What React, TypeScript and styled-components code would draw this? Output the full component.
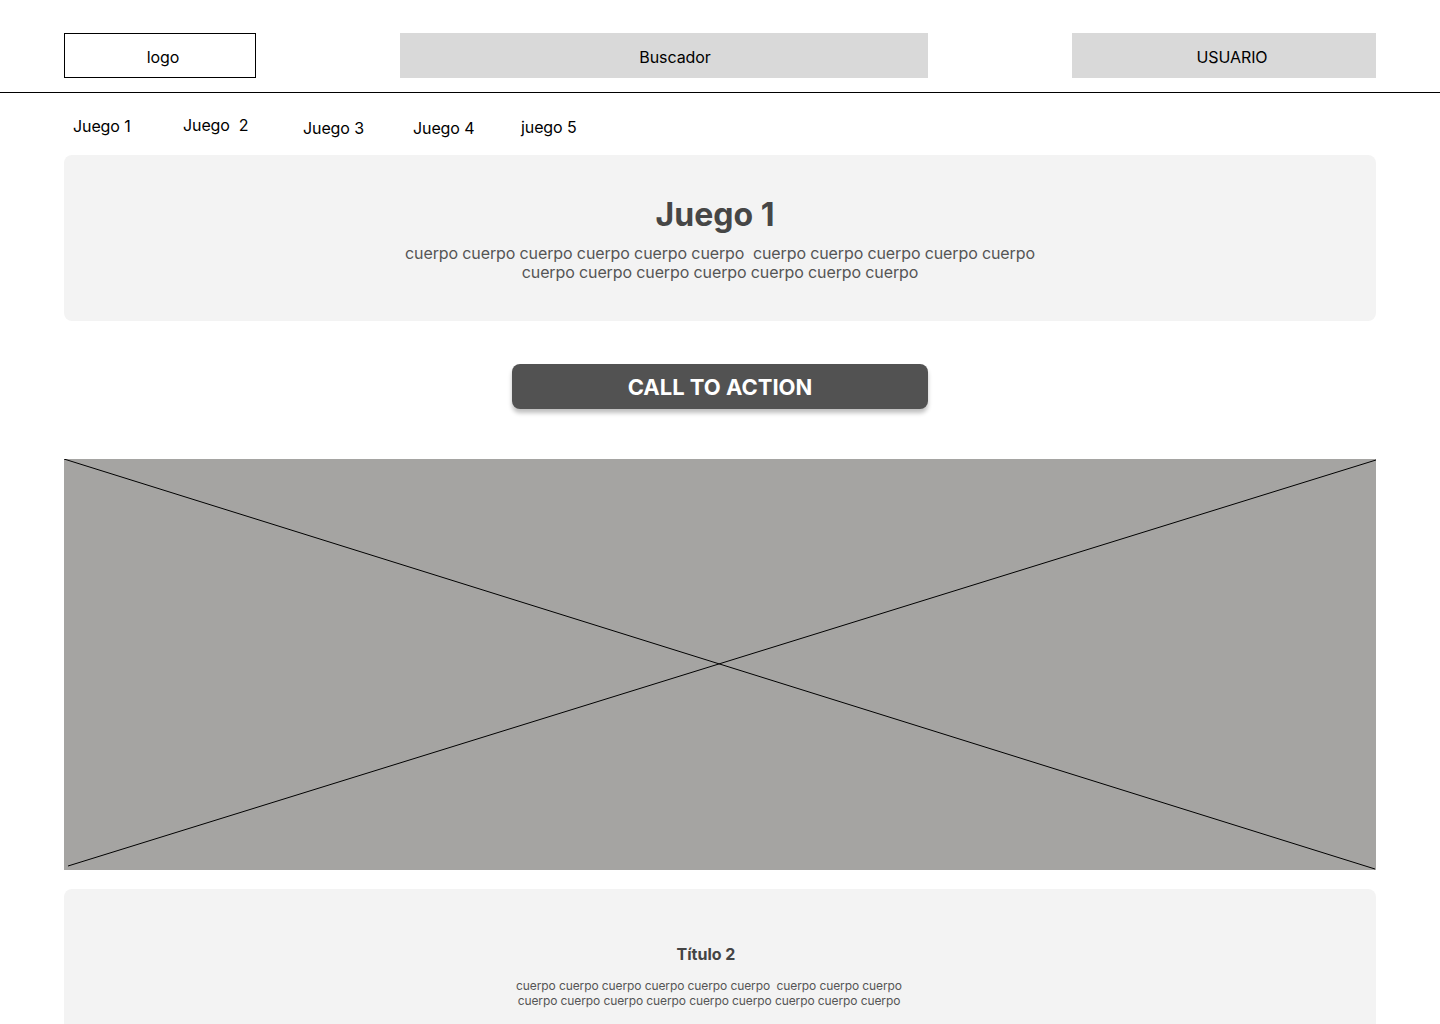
import styled, { createGlobalStyle } from 'styled-components'

const GlobalStyle = createGlobalStyle`
    body {
        margin: 0;
        background: #ffffff;
        font-family: Inter, "Noto Sans", Arial, sans-serif;
        color: #000;
    }
`

const Page = styled.div`
    width: 1440px;
    min-height: 1024px;
    overflow: hidden;
`

const Header = styled.header`
    display: flex;
    gap: 144px;
    padding: 33px 64px 14px;
    border-bottom: 1px solid #000;
`

const HeaderBox = styled.div<{ $w: number; $shift: number; $outlined?: boolean }>`
    width: ${p => p.$w}px;
    height: 45px;
    box-sizing: border-box;
    display: flex;
    align-items: center;
    justify-content: center;
    padding: 2px 0 0 ${p => p.$shift}px;
    font-size: 16px;
    letter-spacing: -0.1px;
    background: ${p => (p.$outlined ? '#fff' : '#d9d9d9')};
    border: ${p => (p.$outlined ? '1px solid #000' : 'none')};
`

const Nav = styled.nav`
    display: flex;
    padding: 24px 0 18px 73px;
`

const Tab = styled.a<{ $w: number; $dy?: number }>`
    width: ${p => p.$w}px;
    font-size: 16px;
    line-height: 20px;
    letter-spacing: -0.1px;
    color: #000;
    text-decoration: none;
    white-space: pre;
    transform: translateY(${p => p.$dy || 0}px);
`

const Main = styled.main`
    display: flex;
    flex-direction: column;
    align-items: center;
    padding: 0 64px;
`

const Card = styled.section<{ $pt: number; $pb: number; $shift?: number }>`
    width: 100%;
    box-sizing: border-box;
    background: #f3f3f3;
    border-radius: 8px;
    padding: ${p => p.$pt}px ${p => p.$shift || 0}px ${p => p.$pb}px 0;
    text-align: center;
    color: #4a4a4a;
`

const HeroTitle = styled.h1`
    margin: 0 10px 0 0;
    font-size: 32px;
    line-height: 39px;
    font-weight: 700;
    color: #464646;
`

const HeroText = styled.p`
    margin: 10px 0 0;
    font-size: 16px;
    line-height: 19px;
    letter-spacing: -0.12px;
    color: #555;
`

const CTA = styled.button`
    margin-top: 43px;
    width: 416px;
    height: 45px;
    border: none;
    border-radius: 8px;
    background: #525252;
    color: #fff;
    font-family: Inter, "Noto Sans", Arial, sans-serif;
    font-size: 22px;
    font-weight: 700;
    box-shadow: 0 4px 4px rgba(0, 0, 0, 0.25);
    cursor: pointer;
`

const Placeholder = styled.div`
    margin-top: 50px;
    width: 100%;
    height: 411px;
    background: #a5a4a2;
`

const Cross = styled.svg`
    display: block;
    width: 100%;
    height: 100%;
`

const SecondCard = styled(Card)`
    margin-top: 19px;
`

const SectionTitle = styled.h2`
    margin: 0 6px 0 0;
    font-size: 16px;
    line-height: 20px;
    font-weight: 700;
    color: #444;
`

const SectionText = styled.p`
    margin: 14px 0 0;
    font-size: 12px;
    line-height: 15px;
    letter-spacing: -0.1px;
    color: #555;
`

const tabs = [
    { label: 'Juego 1', w: 110, dy: -1 },
    { label: 'Juego  2', w: 120, dy: -2 },
    { label: 'Juego 3', w: 110, dy: 1 },
    { label: 'Juego 4', w: 108, dy: 1 },
    { label: 'juego 5', w: 100, dy: 0 },
]

const App = () => {
    return (
        <Page>
            <GlobalStyle />
            <Header>
                <HeaderBox $w={192} $shift={6} $outlined>logo</HeaderBox>
                <HeaderBox $w={528} $shift={22}>Buscador</HeaderBox>
                <HeaderBox $w={304} $shift={16}>USUARIO</HeaderBox>
            </Header>
            <Nav>
                {tabs.map(t => (
                    <Tab key={t.label} $w={t.w} $dy={t.dy} href="#">
                        {t.label}
                    </Tab>
                ))}
            </Nav>
            <Main>
                <Card $pt={40} $pb={39}>
                    <HeroTitle>Juego 1</HeroTitle>
                    <HeroText>
                        cuerpo cuerpo cuerpo cuerpo cuerpo cuerpo&nbsp; cuerpo cuerpo cuerpo cuerpo cuerpo
                        <br />
                        cuerpo cuerpo cuerpo cuerpo cuerpo cuerpo cuerpo
                    </HeroText>
                </Card>
                <CTA>CALL TO ACTION</CTA>
                <Placeholder>
                    <Cross viewBox="0 0 1312 411" preserveAspectRatio="none">
                        <line x1="0" y1="0" x2="1311" y2="410" stroke="#000" strokeWidth="1" />
                        <line x1="4" y1="407" x2="1312" y2="1" stroke="#000" strokeWidth="1" />
                    </Cross>
                </Placeholder>
                <SecondCard $pt={55} $pb={40} $shift={22}>
                    <SectionTitle>Título 2</SectionTitle>
                    <SectionText>
                        cuerpo cuerpo cuerpo cuerpo cuerpo cuerpo&nbsp; cuerpo cuerpo cuerpo
                        <br />
                        cuerpo cuerpo cuerpo cuerpo cuerpo cuerpo cuerpo cuerpo cuerpo
                    </SectionText>
                </SecondCard>
            </Main>
        </Page>
    )
}

export default App
